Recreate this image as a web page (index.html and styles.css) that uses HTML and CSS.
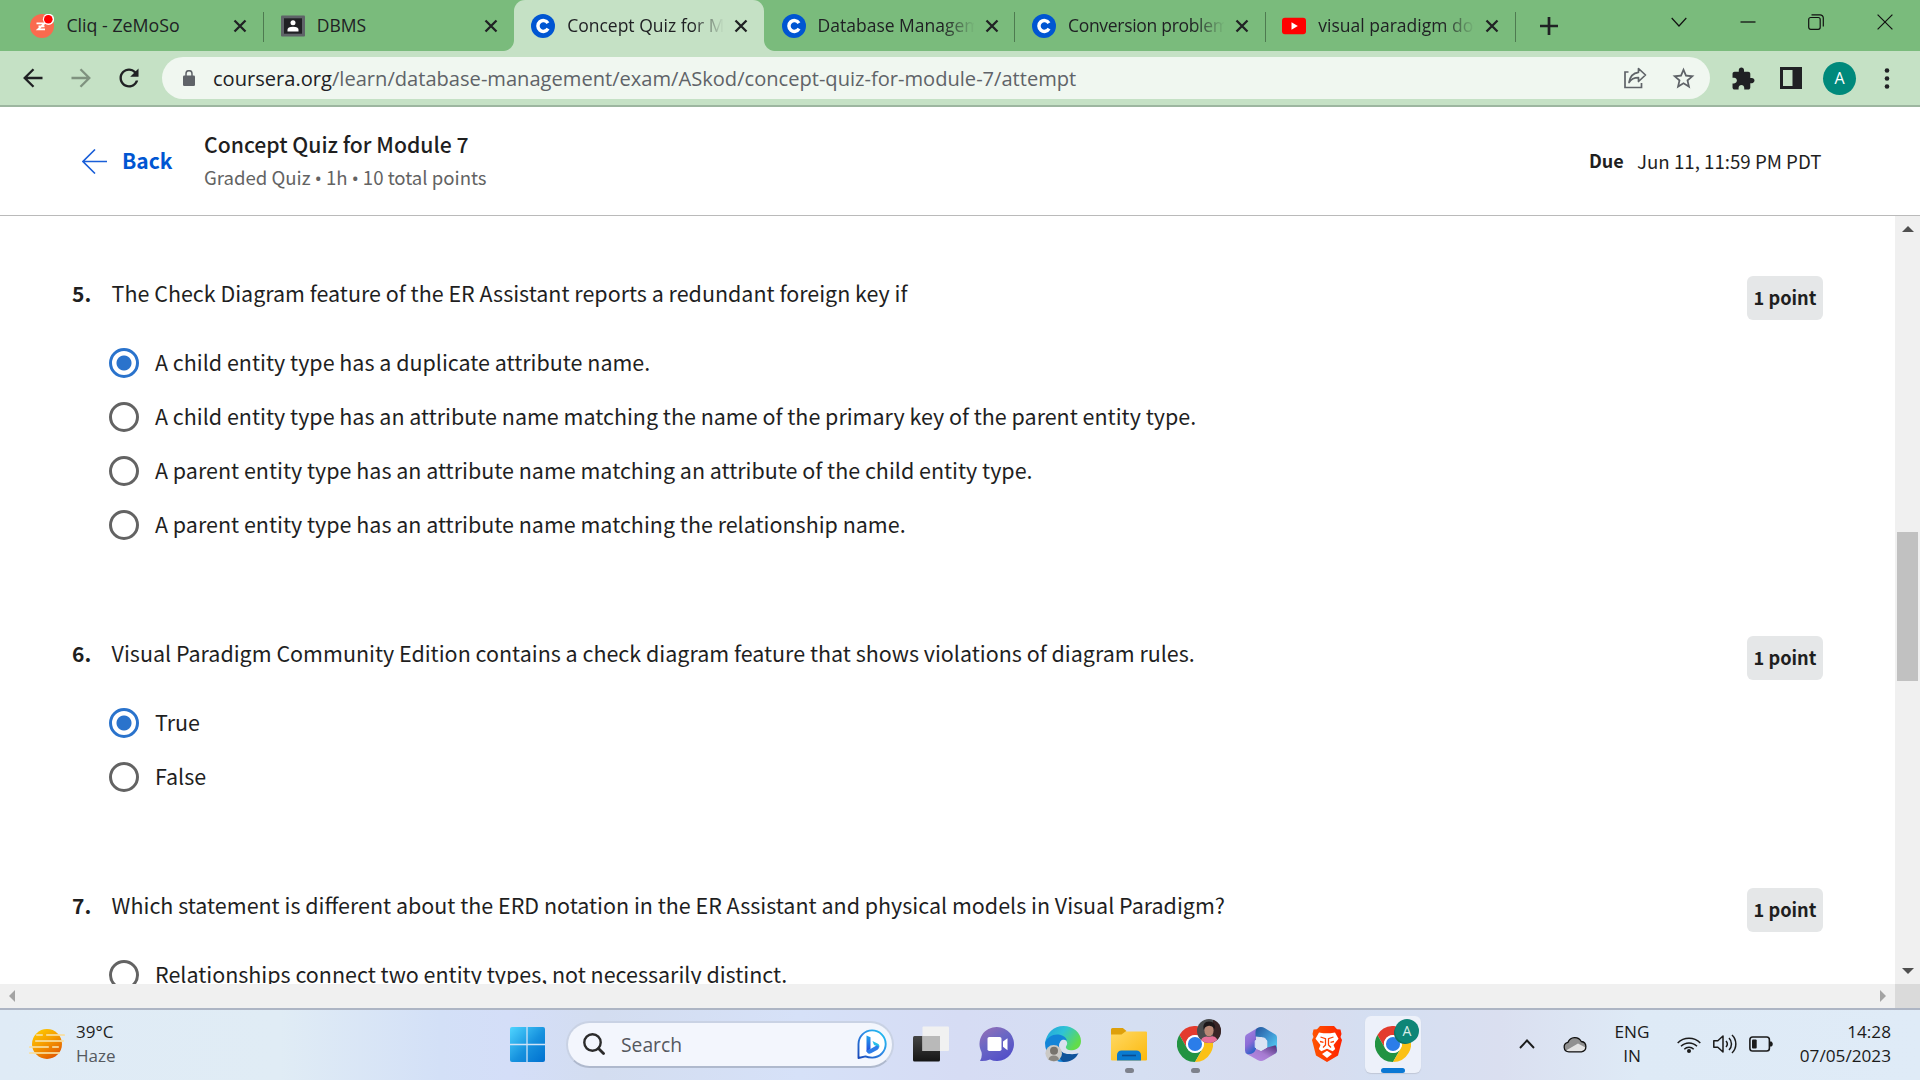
FILE: index.html
```html
<!DOCTYPE html>
<html lang="en">
<head>
<meta charset="utf-8">
<title>Concept Quiz for Module 7</title>
<link rel="stylesheet" href="styles.css">
</head>
<body>
<svg class="defs" width="0" height="0">
  <defs>
    <linearGradient id="g-win" x1="0" y1="0" x2="1" y2="1"><stop offset="0" stop-color="#4fd5ff"/><stop offset=".55" stop-color="#1691de"/><stop offset="1" stop-color="#0070cf"/></linearGradient>
    <linearGradient id="g-bing" x1="1" y1="0" x2="0" y2="1"><stop offset="0" stop-color="#1fc8f2"/><stop offset=".5" stop-color="#2f86e4"/><stop offset="1" stop-color="#1848b8"/></linearGradient>
    <linearGradient id="g-bing-b" x1="0" y1="0" x2="0" y2="1"><stop offset="0" stop-color="#23a5ee"/><stop offset="1" stop-color="#2348dd"/></linearGradient>
    <linearGradient id="g-dark" x1="0" y1="0" x2="0" y2="1"><stop offset="0" stop-color="#454545"/><stop offset="1" stop-color="#151515"/></linearGradient>
    <linearGradient id="g-chat" x1="0" y1="0" x2=".6" y2="1"><stop offset="0" stop-color="#9a70b5"/><stop offset=".5" stop-color="#6a67c4"/><stop offset="1" stop-color="#5450c8"/></linearGradient>
    <linearGradient id="g-edge" x1="0" y1="0" x2="1" y2=".5"><stop offset="0" stop-color="#209fe0"/><stop offset=".5" stop-color="#2fc3d5"/><stop offset="1" stop-color="#62dc4a"/></linearGradient>
    <linearGradient id="g-folder" x1="0" y1="0" x2="1" y2="1"><stop offset="0" stop-color="#ffd964"/><stop offset="1" stop-color="#fcb90d"/></linearGradient>
    <linearGradient id="g-brave" x1="0" y1="0" x2="1" y2="0"><stop offset="0" stop-color="#ff5500"/><stop offset="1" stop-color="#ff2200"/></linearGradient>
    <linearGradient id="g-sun" x1="0" y1="0" x2=".6" y2="1"><stop offset="0" stop-color="#ffd000"/><stop offset=".5" stop-color="#f6a000"/><stop offset="1" stop-color="#e25c00"/></linearGradient>
    <linearGradient id="g-m1" x1="0" y1="0" x2=".4" y2="1"><stop offset="0" stop-color="#a487e0"/><stop offset=".6" stop-color="#8b6bd6"/><stop offset="1" stop-color="#2c62c8"/></linearGradient>
    <linearGradient id="g-m2" x1="0" y1="0" x2="1" y2="1"><stop offset="0" stop-color="#24559c"/><stop offset=".5" stop-color="#3f95d2"/><stop offset="1" stop-color="#58ddfb"/></linearGradient>
    <linearGradient id="g-m3" x1="0" y1="1" x2="1" y2="0"><stop offset="0" stop-color="#b88be8"/><stop offset=".5" stop-color="#a67bd0"/><stop offset="1" stop-color="#4d2f78"/></linearGradient>
    <symbol id="close" viewBox="0 0 14 14"><path d="M1.5 1.5l11 11M12.5 1.5l-11 11" fill="none" stroke="#202124" stroke-width="2.3"/></symbol>
    <symbol id="coursera" viewBox="0 0 24 24"><circle cx="12" cy="12" r="12" fill="#0056d2"/><path d="M16.9 9.1a5.4 5.4 0 1 0 .1 5.6" fill="none" stroke="#fff" stroke-width="3.5"/></symbol>
    <symbol id="chrome" viewBox="0 0 48 48">
      <path d="M24 12H44.8A24 24 0 0 0 3.2 12L13.6 30A12 12 0 0 1 24 12z" fill="#e33b2e"/>
      <path d="M3.2 12A24 24 0 0 0 24 48L34.4 30A12 12 0 0 1 13.6 30z" fill="#229342"/>
      <path d="M44.8 12A24 24 0 0 1 24 48L34.4 30A12 12 0 0 0 24 12z" fill="#fbc116"/>
      <circle cx="24" cy="24" r="12" fill="#fff"/><circle cx="24" cy="24" r="9.4" fill="#2b7de9"/>
    </symbol>
  </defs>
</svg>

<div class="tabstrip">
  <div class="tab">
    <svg class="favicon" viewBox="0 0 24 24"><circle cx="12" cy="12" r="12" fill="#fa6a4e"/><path d="M6.5 9.3h8L8 15.4h7M8.5 12.3h6" fill="none" stroke="#fff" stroke-width="1.8"/><circle cx="18.5" cy="5.3" r="5.6" fill="#fff"/><circle cx="18.3" cy="5.3" r="4.3" fill="#f00"/></svg>
    <span class="tab-title wide"><span>Cliq - ZeMoSo</span></span><svg class="tab-x"><use href="#close"/></svg>
  </div>
  <div class="tab no-sep">
    <svg class="favicon" viewBox="0 0 24 24"><rect y="1.5" width="24" height="21" rx="1" fill="#5f6368"/><rect x="3" y="4.3" width="18" height="15.4" fill="#202124"/><circle cx="12" cy="8.7" r="2.5" fill="#fff"/><path d="M6.5 17.5v-1.7q0-3 5.500-3t5.500 3v1.700z" fill="#fff"/></svg>
    <span class="tab-title"><span>DBMS</span></span><svg class="tab-x"><use href="#close"/></svg>
  </div>
  <div class="tab active">
    <svg class="favicon"><use href="#coursera"/></svg>
    <span class="tab-title fade"><span>Concept Quiz for Mo</span></span><svg class="tab-x"><use href="#close"/></svg>
  </div>
  <div class="tab">
    <svg class="favicon"><use href="#coursera"/></svg>
    <span class="tab-title fade"><span>Database Managem</span></span><svg class="tab-x"><use href="#close"/></svg>
  </div>
  <div class="tab">
    <svg class="favicon"><use href="#coursera"/></svg>
    <span class="tab-title fade tight"><span>Conversion problem</span></span><svg class="tab-x"><use href="#close"/></svg>
  </div>
  <div class="tab">
    <svg class="favicon" viewBox="0 0 24 24"><rect y="3.8" width="24" height="16.4" rx="3" fill="#f00"/><path d="M9.5 8.3v7.4l6.3-3.7z" fill="#fff"/></svg>
    <span class="tab-title fade"><span>visual paradigm dow</span></span><svg class="tab-x"><use href="#close"/></svg>
  </div>
  <svg class="newtab" viewBox="0 0 18 18"><path d="M9 0v18M0 9h18" stroke="#202124" stroke-width="2.7"/></svg>
  <div class="winctl">
    <svg viewBox="0 0 16 16"><path d="M.7 4l7.3 8 7.3-8" fill="none" stroke="#111" stroke-width="1.2"/></svg>
    <svg viewBox="0 0 16 16"><path d="M.5 8h15" stroke="#111" stroke-width="1.3"/></svg>
    <svg viewBox="0 0 16 16"><rect x=".7" y="3.5" width="11.5" height="11.8" rx="2" fill="none" stroke="#111" stroke-width="1.2"/><path d="M3.5 .8h8.500a3.300 3.300 0 0 1 3.300 3.300v8.400" fill="none" stroke="#111" stroke-width="1.2"/></svg>
    <svg viewBox="0 0 16 16"><path d="M.6 .6l14.8 14.8M15.4 .6L.6 15.4" stroke="#111" stroke-width="1.2"/></svg>
  </div>
</div>

<div class="toolbar">
  <div class="nav">
    <svg viewBox="0 0 20 20"><path d="M19.5 10H2M10.5 1.2L1.7 10l8.800 8.800" fill="none" stroke="#202124" stroke-width="2.3"/></svg>
    <svg viewBox="0 0 20 20"><path d="M.5 10H18M9.5 1.2l8.800 8.800-8.800 8.800" fill="none" stroke="#7f927f" stroke-width="2.3"/></svg>
    <svg viewBox="3.6 3.6 16.8 16.8"><path fill="#202124" d="M17.650 6.350C16.200 4.900 14.210 4 12 4c-4.420 0-7.990 3.580-7.990 8s3.570 8 7.990 8c3.730 0 6.840-2.550 7.730-6h-2.080c-.82 2.330-3.040 4-5.650 4-3.310 0-6-2.690-6-6s2.690-6 6-6c1.660 0 3.140.69 4.220 1.780L13 11h7V4l-2.350 2.350z"/></svg>
  </div>
  <div class="omnibox">
    <svg class="lock" viewBox="0 0 12 16"><rect y="5.6" width="12" height="10.4" rx="1.3" fill="#5f6368"/><path d="M3 6V3.700a3 3 0 0 1 6 0V6" fill="none" stroke="#5f6368" stroke-width="1.5"/></svg>
    <span class="url"><span class="host">coursera.org</span>/learn/database-management/exam/ASkod/concept-quiz-for-module-7/attempt</span>
    <svg class="share" viewBox="0 0 24 24"><path d="M5.500 6H2v15.500h16.500V17" fill="none" stroke="#5f6368" stroke-width="1.7"/><path d="M15.500 2.500l7 6.500-7 6.500v-3.800c-4.500 0-7.500 1.500-9.500 4.800.8-5 3.500-9.500 9.500-10.200z" fill="none" stroke="#5f6368" stroke-width="1.7" stroke-linejoin="round"/></svg>
    <svg class="star" viewBox="1.5 1.5 21 20"><path fill="#5f6368" d="M22 9.240l-7.190-.62L12 2 9.190 8.630 2 9.240l5.460 4.730L5.820 21 12 17.270 18.180 21l-1.630-7.030L22 9.240zM12 15.400l-3.760 2.270 1-4.280-3.320-2.880 4.380-.38L12 6.100l1.710 4.040 4.380.38-3.320 2.880 1 4.280L12 15.400z"/></svg>
  </div>
  <div class="actions">
    <svg class="puzzle" viewBox="1.5 .5 22 22"><path fill="#202124" d="M20.500 11H19V7c0-1.100-.9-2-2-2h-4V3.500C13 2.120 11.880 1 10.500 1S8 2.120 8 3.500V5H4c-1.100 0-1.990.9-1.990 2v3.800H3.500c1.490 0 2.700 1.210 2.700 2.700s-1.210 2.700-2.700 2.700H2V20c0 1.100.9 2 2 2h3.800v-1.500c0-1.490 1.210-2.700 2.700-2.700 1.490 0 2.700 1.210 2.700 2.700V22H17c1.100 0 2-.9 2-2v-4h1.500c1.380 0 2.500-1.120 2.500-2.500S21.880 11 20.500 11z"/></svg>
    <svg class="panel" viewBox="0 0 22 22"><path fill="#202124" fill-rule="evenodd" d="M0 0h22v22H0zM3 3v16h9.500V3z"/></svg>
    <span class="profile">A</span>
    <svg class="dots" viewBox="0 0 6 21"><circle cx="3" cy="2.5" r="2.3" fill="#202124"/><circle cx="3" cy="10.5" r="2.3" fill="#202124"/><circle cx="3" cy="18.5" r="2.3" fill="#202124"/></svg>
  </div>
</div>

<header class="quizbar">
  <svg class="backarrow" viewBox="0 0 25 25"><path d="M25 12.500H1M13 .5L1 12.500l12 12" fill="none" stroke="#1a5fd8" stroke-width="1.6"/></svg>
  <span class="back">Back</span>
  <div class="heading"><span class="title">Concept Quiz for Module 7</span><span class="meta">Graded Quiz <b>•</b> 1h <b>•</b> 10 total points</span></div>
  <span class="due">Due</span><span class="duedate">Jun 11, 11:59 PM PDT</span>
</header>

<div class="viewport">
  <main class="quiz">
    <section class="question">
      <div class="prompt"><span class="num">5.</span><span class="ptext">The Check Diagram feature of the ER Assistant reports a redundant foreign key if</span><span class="points">1 point</span></div>
      <div class="option"><i class="radio on"></i><span class="otext">A child entity type has a duplicate attribute name.</span></div>
      <div class="option"><i class="radio"></i><span class="otext">A child entity type has an attribute name matching the name of the primary key of the parent entity type.</span></div>
      <div class="option"><i class="radio"></i><span class="otext">A parent entity type has an attribute name matching an attribute of the child entity type.</span></div>
      <div class="option"><i class="radio"></i><span class="otext">A parent entity type has an attribute name matching the relationship name.</span></div>
    </section>
    <section class="question">
      <div class="prompt"><span class="num">6.</span><span class="ptext">Visual Paradigm Community Edition contains a check diagram feature that shows violations of diagram rules.</span><span class="points">1 point</span></div>
      <div class="option"><i class="radio on"></i><span class="otext">True</span></div>
      <div class="option"><i class="radio"></i><span class="otext">False</span></div>
    </section>
    <section class="question">
      <div class="prompt"><span class="num">7.</span><span class="ptext">Which statement is different about the ERD notation in the ER Assistant and physical models in Visual Paradigm?</span><span class="points">1 point</span></div>
      <div class="option"><i class="radio"></i><span class="otext">Relationships connect two entity types, not necessarily distinct.</span></div>
    </section>
  </main>
  <div class="vscroll">
    <svg class="tri" viewBox="0 0 12 6"><path d="M0 6h12L6 0z" fill="#505050"/></svg>
    <div class="thumb"></div>
    <svg class="tri" viewBox="0 0 12 6"><path d="M0 0h12L6 6z" fill="#505050"/></svg>
  </div>
</div>
<div class="hscroll">
  <svg viewBox="0 0 6 12"><path d="M6 0v12L0 6z" fill="#a3a3a3"/></svg>
  <svg viewBox="0 0 6 12"><path d="M0 0v12l6-6z" fill="#a3a3a3"/></svg>
  <div class="corner"></div>
</div>

<footer class="taskbar">
  <div class="weather">
    <svg viewBox="0 0 36 32"><circle cx="18" cy="16" r="15" fill="url(#g-sun)"/><path d="M8 7h5M18 7h17M7 13h27M1 19h18M24 19h5M1 25h29" stroke="#f8dfa0" stroke-width="2.2" stroke-linecap="round" opacity=".85"/></svg>
    <div class="wtext"><span class="temp">39°C</span><span class="cond">Haze</span></div>
  </div>
  <svg class="start" viewBox="0 0 35 35"><rect width="35" height="35" rx="2" fill="url(#g-win)"/><path d="M17 0v35M0 17.500h35" stroke="#cfe2f6" stroke-width="1.3"/></svg>
  <div class="search">
    <svg class="lens" viewBox="0 0 22 22"><circle cx="9.5" cy="9.5" r="8.2" fill="none" stroke="#2b2b2b" stroke-width="2.4"/><path d="M15.500 15.500l5 5" stroke="#2b2b2b" stroke-width="2.8" stroke-linecap="round"/></svg>
    <span class="stext">Search</span>
    <svg class="bing" viewBox="0 0 30 30"><path d="M1.500 29V15A13.600 13.600 0 1 1 15.300 28.600Q11 28.600 8.500 27.400z" fill="#fff" stroke="url(#g-bing)" stroke-width="1.9" stroke-linejoin="round"/><path d="M9.500 6.500l4 1.700V20l-4 3z" fill="url(#g-bing-b)"/><path d="M15.500 12l5 2.500a3.400 3.400 0 0 1 1.500 4.500q-1-1.500-2.500-2L17 16z" fill="#25c0ea"/><path d="M9.500 21.500q1 4.500 4.500 2.800l6.500-3.500q2-1.300 1.300-3-1-1.300-2.300-1.300L13.500 20z" fill="#2d7de9"/></svg>
  </div>
  <div class="apps">
    <div class="app"><svg viewBox="0 0 36 36"><rect y="10" width="27" height="25.5" rx="1.5" fill="url(#g-dark)"/><path d="M9.500 10V1.500A1 1 0 0 1 10.500.5h24.500a1 1 0 0 1 1 1V24a1 1 0 0 1-1 1H9.500z" fill="#f1f1f1"/><path d="M9.500 10H27v15H9.500z" fill="#b9b9b9"/></svg></div>
    <div class="app"><svg viewBox="0 0 36 36"><path d="M18 1A17 17 0 1 1 11 33.500Q6 35.500 1 35 3.500 31 2.500 26A17 17 0 0 1 18 1z" fill="url(#g-chat)"/><rect x="8.5" y="11" width="14" height="14" rx="1.8" fill="#fff"/><path d="M24 15.500l4.500-3.300v12L24 20.800z" fill="#fff"/></svg></div>
    <div class="app"><svg viewBox="0 0 36 36"><path d="M0 17C1.500 7 8.500 0 18.500 0 28.500 0 36 7 36 15c0 6-4.500 9.500-10 9.500-4 0-6.500-1.500-6-3.500 3-4-1-7.500-5-7.500z" fill="url(#g-edge)"/><path d="M0 17C2 11.500 7 8.500 12 8.500c5 0 9 2.500 10 6-4-2-8 1-8 6 0 8 6 12.500 13 12-3 2.500-6 3.500-9 3.500C8 36 0 28 0 17z" fill="#1384d8"/><path d="M14 20c0 6 6 8.500 12 8 4 0 6.500-1.500 7.500-1C31 33 25 36 18.500 36 13.500 33 12 26 14 20z" fill="#10539b"/><path d="M14.500 19.500c0-4 2-5.800 4-5.800 2.200 0 3.700 1.700 3.700 3.800 0 2-2 3-1.200 4.600 1.500 2.800 8 3.400 13 1.900v3c-6 2.500-19.500 1.500-19.500-7.500z" fill="#dbe1ef"/><circle cx="8.7" cy="27.300" r="8.3" fill="#cbc9c5"/><circle cx="9" cy="24.7" r="4" fill="#77736d"/><path d="M3.500 33.500c.5-5.500 10-5.500 10.500 0q-5 3.500-10.500 0z" fill="#8b8781"/></svg></div>
    <div class="app"><svg viewBox="0 0 36 36"><path d="M0 8V3.500A1.500 1.500 0 0 1 1.500 2h10.300L15.500 5 12 9H0z" fill="#dea00b"/><path d="M0 8.500h10.500l4-3H35a1 1 0 0 1 1 1V33.500a1 1 0 0 1-1 1H1a1 1 0 0 1-1-1z" fill="url(#g-folder)"/><path d="M6 34.500V29a4.500 4.500 0 0 1 4.500-4.500h15A4.500 4.500 0 0 1 30 29v5.500z" fill="#0a7bd0"/><path d="M11 29.500h14" stroke="#0a4c90" stroke-width="1.6"/></svg><i class="dot"></i></div>
    <div class="app"><svg><use href="#chrome"/></svg><svg class="badge" viewBox="0 0 24 24"><defs><clipPath id="ph"><circle cx="12" cy="12" r="12"/></clipPath></defs><g clip-path="url(#ph)"><rect width="24" height="24" fill="#4a4c4e"/><path d="M16 0h8v24h-8z" fill="#3a2426"/><path d="M3 24q2-8 9-6 8-3 9 6z" fill="#e8709a"/><ellipse cx="12" cy="11.500" rx="4.600" ry="6" fill="#b98876"/><path d="M6.500 11Q5 2.500 12 2.500T18 10q-3-3.500-6-3.300-4 .3-5.500 4.300z" fill="#1d1719"/></g></svg><i class="dot"></i></div>
    <div class="app"><svg viewBox="-2 -1 36 36"><path d="M12 1.200L1.500 7.500Q0 8.500 0 10.500V23.500q0 2.500 2 3.600l3 1.200q6-.8 6-6.300V9z" fill="url(#g-m1)"/><path d="M12 1.200q4-2.200 8 0l10.500 6.300Q32 8.500 32 10.500V23.500q0 2-1.500 3L22 21.500V15q0-3-3-4.500l-8.500-1V5q0-2.500 1.500-3.800z" fill="url(#g-m2)"/><path d="M2 27q7 1 9-5l5 1.500 6-3 8.500-2.200Q32 20 32 23.500q0 2-1.500 3L19.500 33q-3.500 2-7 0z" fill="url(#g-m3)"/><path d="M16 10.500l5.800 3.300v6.500L16 23.600l-5.800-3.300v-6.500z" fill="#dbe3f4" stroke="#dbe3f4" stroke-width="1" stroke-linejoin="round"/></svg></div>
    <div class="app"><svg viewBox="0 0 36 36"><path d="M11 0h14l3 3.200 3.500.3 1 4.500L31.500 11 33 14l-4 15.500L18 36 7 29.500 3 14l1.500-3L3.500 8l1-4.500L8 3.200z" fill="url(#g-brave)"/><path d="M10 6.500l4.500.8h7l4.500-.8 3.500 6.200L24.500 19l1.700 4-2.500 2.300-5.700-2.500-5.700 2.500L9.800 23l1.700-4-5-6.300z" fill="#fff"/><path d="M11.500 11l5 1.600v6.400l-2.500 2.500M24.500 11l-5 1.600v6.400l2.500 2.500M11 15.500l3.500.8M25 15.500l-3.500.8" fill="none" stroke="#ff4000" stroke-width="1.3"/><path d="M13 28l5-3.200 5 3.200-5 4z" fill="#fff"/></svg></div>
    <div class="app current"><svg><use href="#chrome"/></svg><span class="badge letter">A</span><i class="bar"></i></div>
  </div>
  <div class="tray">
    <svg class="chev" viewBox="0 0 16 10"><path d="M1 9l7-7.500L15 9" fill="none" stroke="#1b1b1b" stroke-width="1.9"/></svg>
    <svg class="cloud" viewBox="0 0 24 17"><path d="M6 15.800A4.800 4.800 0 0 1 5 6.300 7.300 7.300 0 0 1 18.300 5.500 5.200 5.200 0 0 1 18.500 15.800z" fill="#909090"/><path d="M3 14.500L15 7.500l7.500 4q-.5 4.300-4 4.300H6q-2 0-3-1.300z" fill="#e2e2e2"/><path d="M6 15.800A4.800 4.800 0 0 1 5 6.300 7.300 7.300 0 0 1 18.300 5.500 5.200 5.200 0 0 1 18.500 15.800z" fill="none" stroke="#111" stroke-width="1.3"/></svg>
    <div class="lang"><span>ENG</span><span>IN</span></div>
    <svg class="wifi" viewBox="0 0 24 17"><g fill="none" stroke="#1b1b1b" stroke-width="1.5"><path d="M.7 7a16 16 0 0 1 22.600 0"/><path d="M4 10.200a11.300 11.300 0 0 1 16 0"/><path d="M7.300 13.300a6.700 6.700 0 0 1 9.400 0"/></g><circle cx="12" cy="15" r="2" fill="#1b1b1b"/></svg>
    <svg class="vol" viewBox="0 0 24 20"><g fill="none" stroke="#1b1b1b" stroke-width="1.5"><path d="M.8 6.700h4L10 2v16l-5.200-4.700h-4z" stroke-linejoin="round"/><path d="M13 7a4.500 4.500 0 0 1 0 6M16 4a8.500 8.500 0 0 1 0 12M19 1a12.500 12.500 0 0 1 0 18"/></g></svg>
    <svg class="batt" viewBox="0 0 24 16"><rect x=".9" y="1" width="19.5" height="14" rx="2.7" fill="none" stroke="#1b1b1b" stroke-width="1.6"/><rect x="3" y="3.5" width="4.7" height="9" rx="1" fill="#1b1b1b"/><path d="M21 5.500h1.500q1.300 1 1.300 2.500t-1.300 2.500H21z" fill="#1b1b1b"/></svg>
    <div class="clock"><span>14:28</span><span>07/05/2023</span></div>
  </div>
</footer>
</body>
</html>
```
FILE: styles.css
```css
* { box-sizing: border-box; }
body {
  margin: 0;
  width: 1920px;
  height: 1080px;
  overflow: hidden;
  display: flex;
  flex-direction: column;
  background: #fff;
  color: #1f1f1f;
  font-family: "Noto Sans CJK SC", "Noto Sans CJK JP", sans-serif;
}
svg { display: block; flex: none; }
span { white-space: nowrap; }
.defs { position: absolute; }

/* browser chrome */
.tabstrip, .toolbar, .taskbar { font-family: "Open Sans", "Noto Sans", sans-serif; }
.tabstrip {
  height: 51px;
  flex: none;
  display: flex;
  align-items: center;
  padding-left: 12.8px;
  background: #7abb7c;
}
.tab {
  position: relative;
  width: 250.4px;
  height: 51px;
  flex: none;
  display: flex;
  align-items: center;
  padding-left: 17.6px;
}
.tab::after {
  content: "";
  position: absolute;
  right: -1px;
  top: 12px;
  width: 1px;
  height: 30px;
  background: #4e7a50;
}
.tab.no-sep::after { display: none; }
.tab.active { background: #c5e1c5; border-radius: 11px 11px 0 0; }
.tab.active::before, .tab.active::after {
  content: "";
  position: absolute;
  top: auto;
  bottom: 0;
  width: 11px;
  height: 11px;
}
.tab.active::before { left: -11px; background: radial-gradient(circle at 0 0, #7abb7c 10.5px, #c5e1c5 11.5px); }
.tab.active::after { right: -11px; background: radial-gradient(circle at 100% 0, #7abb7c 10.5px, #c5e1c5 11.5px); }
.favicon { width: 24px; height: 24px; margin-right: 12px; }
.tab-title { width: 156px; overflow: hidden; font-size: 17.5px; line-height: 26px; padding-bottom: 1px; color: #202124; }
.wide { font-size: 17.8px; }
.tight { letter-spacing: -0.3px; }
.fade { -webkit-mask-image: linear-gradient(90deg, #000 125px, transparent 157px); mask-image: linear-gradient(90deg, #000 125px, transparent 157px); }
.tab-x { width: 14px; height: 14px; margin-left: 11px; }
.newtab { width: 18px; height: 18px; margin-left: 25px; }
.winctl { margin-left: 113px; display: flex; gap: 52.6px; padding-bottom: 8px; }
.winctl svg { width: 16px; height: 16px; }

.toolbar {
  height: 56px;
  flex: none;
  display: flex;
  align-items: center;
  background: #c5e1c5;
  border-bottom: 2px solid #9db6a0;
}
.nav { display: flex; gap: 28px; padding-left: 23px; width: 162px; }
.nav svg { width: 20px; height: 20px; }
.omnibox {
  width: 1548px;
  height: 42px;
  border-radius: 21px;
  background: #f0f7f0;
  display: flex;
  align-items: center;
  padding-left: 21px;
}
.lock { width: 12px; height: 16px; }
.url { margin-left: 18px; width: 1413px; font-size: 20.1px; line-height: 28px; padding-top: 1px; color: #5f6368; }
.host { color: #202124; }
.share { width: 24px; height: 24px; margin-left: -3px; }
.star { width: 23px; height: 22px; margin-left: 25px; }
.actions { display: flex; align-items: center; }
.puzzle { width: 23px; height: 23px; margin-left: 22px; }
.panel { width: 22px; height: 22px; margin-left: 25px; }
.profile {
  width: 33px;
  height: 33px;
  margin-left: 21px;
  border-radius: 50%;
  background: #00897b;
  color: #fff;
  font-size: 16px;
  line-height: 33px;
  text-align: center;
}
.dots { width: 6px; height: 21px; margin-left: 28px; }

/* quiz header */
.quizbar {
  height: 109px;
  flex: none;
  display: flex;
  align-items: center;
  padding-left: 82px;
  border-bottom: 1px solid #bababa;
}
.backarrow { width: 25px; height: 25px; }
.back { margin-left: 15px; width: 82px; font-size: 21px; font-weight: 700; color: #0056d2; line-height: 30px; padding-bottom: 2px; }
.heading { display: flex; flex-direction: column; flex: none; width: 1385px; }
.title { font-size: 21.2px; line-height: 32px; font-weight: 500; }
.meta { font-size: 18.6px; line-height: 33px; color: #636363; }
.meta b { font-family: "Noto Sans", sans-serif; font-weight: 400; }
.due { width: 48px; font-size: 18px; font-weight: 700; padding-bottom: 2px; }
.duedate { font-size: 18.7px; padding-bottom: 2px; }

/* quiz body */
.viewport { height: 768px; flex: none; display: flex; overflow: hidden; }
.quiz { width: 1895px; height: 768px; overflow: hidden; padding: 60px 72px 0; }
.question { margin-bottom: 84px; }
.prompt { display: flex; height: 60px; }
.num { width: 39.6px; font-size: 21px; line-height: 34px; font-weight: 700; }
.ptext { flex: 1; font-size: 21.47px; line-height: 33px; }
.points {
  width: 76px;
  height: 44px;
  border-radius: 6px;
  background: #e5e7e8;
  font-size: 18.2px;
  font-weight: 700;
  line-height: 42px;
  text-align: center;
}
.option { display: flex; align-items: center; height: 54px; padding-left: 37px; }
.radio {
  width: 30px;
  height: 30px;
  flex: none;
  border: 3px solid #636363;
  border-radius: 50%;
  margin-right: 16px;
}
.radio.on { border-color: #2a73cc; background: radial-gradient(circle, #2a73cc 7px, #fff 8px); }
.otext { font-size: 21.47px; line-height: 34px; padding-bottom: 2px; }

.vscroll {
  width: 25px;
  display: flex;
  flex-direction: column;
  align-items: center;
  padding-top: 10px;
  background: #f0f0f0;
}
.tri { width: 12px; height: 6px; }
.thumb { width: 21px; height: 149px; margin: 300px 0 287px; background: #c1c1c1; }
.hscroll {
  height: 24px;
  flex: none;
  display: flex;
  align-items: center;
  justify-content: space-between;
  padding-left: 9px;
  background: #f0f0f0;
}
.hscroll svg { width: 6px; height: 12px; }
.hscroll svg:nth-child(2) { margin-left: auto; margin-right: 9px; }
.corner { width: 25px; height: 24px; background: #dadada; }

/* taskbar */
.taskbar {
  height: 72px;
  flex: none;
  display: flex;
  align-items: center;
  padding-bottom: 2px;
  border-top: 2px solid #adb5c4;
  background: linear-gradient(90deg, #dfebf6 0, #e0ecf5 280px, #d3e0f7 440px, #d4def8 510px, #d3ddf0 600px, #d6e1f8 800px, #d6dcf4 960px, #d5dff2 1140px, #d8dcee 1300px, #d4dff2 1380px, #dadff0 1500px, #deeaf6 1640px, #dfebf7 100%);
}
.weather { display: flex; align-items: center; padding-left: 29px; width: 509.5px; }
.weather svg { width: 36px; height: 32px; }
.wtext { display: flex; flex-direction: column; margin-left: 11px; font-size: 17px; line-height: 24px; }
.cond { color: #55595f; }
.start { width: 35px; height: 35px; }
.search {
  width: 328px;
  height: 47px;
  margin-left: 21px;
  border-radius: 24px;
  border: 2px solid #c9d2e4;
  border-bottom-color: #afb9cd;
  background: #f3f6fd;
  display: flex;
  align-items: center;
  padding-left: 15.5px;
}
.lens { width: 22px; height: 22px; }
.stext { margin-left: 16px; width: 236px; font-size: 19.3px; color: #55585e; }
.bing { width: 30px; height: 30px; }
.apps { display: flex; margin-left: 9.5px; }
.app {
  position: relative;
  width: 56px;
  height: 57px;
  margin-right: 10px;
  display: flex;
  justify-content: center;
  align-items: center;
  border-radius: 6px;
}
.app svg { width: 36px; height: 36px; }
.current { background: #edf1fa; box-shadow: 0 1px 1px #c0c7d6; }
.app .badge { position: absolute; left: 30px; top: 3px; width: 24px; height: 24px; }
.letter { border-radius: 50%; background: #0d8577; box-shadow: -2px 2px 0 -1px #0b7165; color: #d7ece9; font-size: 14px; line-height: 24px; text-align: center; }
.dot, .bar { position: absolute; bottom: 0; width: 9px; height: 5px; border-radius: 3px; background: #7e828c; }
.bar { width: 24px; background: #0a78d4; }
.tray { display: flex; align-items: center; margin-left: auto; padding-right: 29px; font-size: 17.2px; line-height: 24px; color: #1b1b1b; }
.chev { width: 16px; height: 10px; }
.cloud { width: 24px; height: 17px; margin-left: 28px; }
.lang { width: 50px; margin-left: 20px; display: flex; flex-direction: column; align-items: center; }
.wifi { width: 24px; height: 17px; margin-left: 20px; }
.vol { width: 24px; height: 20px; margin-left: 12px; }
.batt { width: 24px; height: 16px; margin-left: 12px; }
.clock { width: 118px; display: flex; flex-direction: column; align-items: flex-end; }
```
